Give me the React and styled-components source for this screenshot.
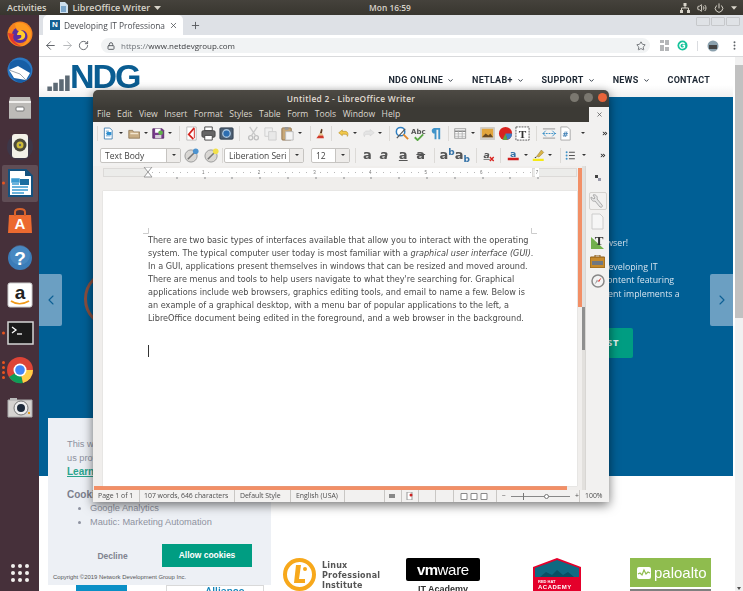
import React from "react";
import styled, { createGlobalStyle } from "styled-components";
import { ArrowLeft, ArrowRight, RotateCw, Lock, Star, X, Plus, MoreVertical, ChevronDown, ChevronLeft, ChevronRight, Volume2, Power } from "lucide-react";

const Global = createGlobalStyle`
  html, body { margin: 0; padding: 0; background: #fff; }
  * { box-sizing: border-box; }
  #root { width: 743px; height: 591px; overflow: hidden; }
`;
const UI = `"Open Sans", "DejaVu Sans", sans-serif`;

const Desktop = styled.div`position: relative; width: 743px; height: 591px; overflow: hidden; display: flex; flex-direction: column; font-family: ${UI}; filter: blur(0.35px);`;
const TopBar = styled.div`height: 15px; flex: none; background: linear-gradient(#45423c, #38362f); color: #d8d4ca; font-size: 9px; font-weight: 600; display: grid; grid-template-columns: 1fr auto 1fr; align-items: center; padding: 0 6px 0 7px;`;
const TopLeft = styled.div`display: flex; align-items: center; gap: 13px;`;
const AppLabel = styled.div`display: flex; align-items: center; gap: 4px;`;
const Clock = styled.div`margin-left: 36px; font-size: 8.4px;`;
const Tray = styled.div`display: flex; justify-content: flex-end; align-items: center; gap: 7px;`;
const Main = styled.div`flex: 1; display: flex; min-height: 0;`;
const Dock = styled.div`width: 39px; flex: none; background: #46303a; display: flex; flex-direction: column; align-items: center;`;
const DockItem = styled.div`position: relative; width: 36px; height: 37.4px; flex: none; display: flex; align-items: center; justify-content: center; border-radius: 2px; background: ${p => p.$active ? "rgba(255,255,255,.14)" : "transparent"};`;
const Dots = styled.div`position: absolute; left: 0; top: 50%; transform: translateY(-50%); display: flex; flex-direction: column; gap: 2px;`;
const Dot = styled.i`display: block; width: 3px; height: 3px; border-radius: 50%; background: #e9541f;`;
const AppGrid = styled.div`margin-top: auto; margin-bottom: 9px; display: grid; grid-template-columns: repeat(3, 4px); gap: 3px;`;
const GridDot = styled.i`width: 4px; height: 4px; border-radius: 50%; background: #f2f0ee;`;

const Browser = styled.div`flex: 1; min-width: 0; display: flex; flex-direction: column;`;
const TabStrip = styled.div`height: 20px; flex: none; background: #dee1e6; display: flex; align-items: flex-end; padding-left: 4px; position: relative;`;
const Tab = styled.div`width: 140px; height: 20px; background: #fff; border-radius: 5px 5px 0 0; display: flex; align-items: center; padding-left: 7px; gap: 4px; font-size: 8.4px; color: #4a4d52; white-space: nowrap; overflow: hidden;`;
const Favicon = styled.span`width: 10px; height: 10px; flex: none; background: #135f92; border: 1px solid #135f92; color: #fff; font: bold 8px/8px "Liberation Sans", sans-serif; text-align: center;`;
const TabTitle = styled.span`width: 101px; overflow: hidden;`;
const NewTab = styled.div`display: flex; align-self: center; margin-left: 7px; color: #55585c;`;
const WinBtns = styled.div`position: absolute; right: 3px; top: 2px; display: flex; gap: 1px;`;
const WinBtn = styled.span`width: 14px; height: 9px; border: 1px solid #c6c8cb; border-radius: 1px; background: #dfe2e6;`;
const UrlBar = styled.div`height: 22px; flex: none; background: #fff; border-bottom: 1px solid #d9dadc; display: flex; align-items: center; padding-left: 5px; color: #5f6368;`;
const NavIcons = styled.div`display: flex; gap: 4px; width: 57px;`;
const Omni = styled.div`width: 549px; height: 15px; border-radius: 8px; background: #f1f3f4; display: flex; align-items: center; padding: 0 4px 0 6px; gap: 6px;`;
const UrlText = styled.span`flex: 1; color: #3b3d40; font-size: 8px;`;
const UrlMuted = styled.span`color: #70757a;`;
const Exts = styled.div`display: flex; align-items: center; margin-left: 10px; gap: 8px;`;
const ExtSep = styled.i`width: 1px; height: 10px; background: #dadce0; margin: 0 1px;`;

const PageWrap = styled.div`flex: 1; min-height: 0; display: flex; background: #fff;`;
const Page = styled.div`flex: 1; min-width: 0; overflow: hidden; display: flex; flex-direction: column; margin-right: 2px;`;
const ScrollBar = styled.div`width: 8px; flex: none; background: #f1f1f1; display: flex; flex-direction: column; padding-top: 8px;`;
const ScrollThumb = styled.div`height: 253px; background: #c1c1c1;`;
const ScrollArrow = styled.div`margin-top: auto; margin-bottom: 1px; margin-left: 2px; width: 0; height: 0; border-left: 2px solid transparent; border-right: 2px solid transparent; border-top: 3px solid #505050;`;
const Header = styled.header`height: 40px; flex: none; display: flex; align-items: flex-start; padding: 8px 0 0 8px; background: linear-gradient(#fff 70%, #f1f1f1);`;
const Logo = styled.div`display: flex; align-items: flex-end; height: 26px;`;
const LogoText = styled.span`font: bold 34px/26px "Liberation Sans", sans-serif; color: #0a5d92; letter-spacing: -2px; margin-left: -5px; position: relative; top: -2px;`;
const Nav = styled.nav`margin-left: auto; margin-right: 23px; margin-top: 9px; display: flex; gap: 18px; font: 700 9px/12px Roboto, sans-serif; letter-spacing: .25px; color: #1d2733;`;
const NavItem = styled.span`display: flex; align-items: center; gap: 4px; white-space: nowrap;`;

const Hero = styled.section`height: 379px; flex: none; background: #005f95; position: relative; display: flex; padding: 173px 0 0 45px;`;
const Ring = styled.div`width: 58px; height: 58px; flex: none; border-radius: 50%; border: 3px solid #8a4f3f;`;
const Arrow = styled.div`position: absolute; top: 177px; ${p => p.$right ? "right: 0;" : "left: 0;"} width: 23px; height: 52px; background: #6b9fc2; color: #0c5f94; display: flex; align-items: center; justify-content: center; border-radius: ${p => p.$right ? "2px 0 0 2px" : "0 2px 2px 0"};`;
const Copy = styled.div`position: absolute; left: 520px; top: 140px; color: #d5e3ee; font-size: 8.8px; line-height: 13.5px; white-space: nowrap;`;
const CopyLine = styled.div`padding-left: ${p => p.$in}px; margin-bottom: ${p => p.$gap || 0}px;`;
const Cta = styled.div`position: absolute; left: 510px; top: 231px; width: 84px; height: 30px; border-radius: 2px; background: #009d82; color: #e6f4f1; font: 700 9.5px/30px ${UI}; letter-spacing: .6px; text-align: right; padding-right: 14px;`;

const Partners = styled.section`flex: 1; display: flex; align-items: flex-start; padding: 82px 0 0 37px; overflow: hidden;`;
const BlueTile = styled.div`width: 51px; height: 10px; margin-top: 26px; background: #0a8fc6; flex: none;`;
const Alliance = styled.div`width: 98px; margin: 27px 0 0 39px; flex: none; border: 1px solid #d9d9d9; border-bottom: 0; height: 10px; font: 500 11px/12px Roboto, sans-serif; color: #1585b9; padding-left: 38px;`;
const Lpi = styled.div`margin-left: 19px; width: 123px; display: flex; gap: 6px; flex: none;`;
const LpiText = styled.div`font: 600 8px/10px "DejaVu Sans", sans-serif; color: #555; margin-top: 3px; letter-spacing: .2px;`;
const VmwareCol = styled.div`width: 126px; flex: none; display: flex; flex-direction: column; align-items: flex-start;`;
const VmwareBox = styled.div`width: 74px; height: 23px; background: #000; border-radius: 2px; color: #fff; font: 15px/23px "Liberation Sans", sans-serif; text-align: center; letter-spacing: -.3px;`;
const Vm = styled.b`letter-spacing: -.6px;`;
const VmCaption = styled.div`width: 74px; text-align: center; font: bold 9px/14px "Liberation Sans", sans-serif; color: #333; margin-top: 1px;`;
const RedHat = styled.div`width: 98px; flex: none;`;
const Palo = styled.div`width: 81px; flex: none; height: 29px; background: #8fbc4e; color: #fff; font: 15px/28px "Liberation Sans", sans-serif; display: flex; align-items: center; gap: 3px; padding-left: 7px;`;
const PaloCol = styled.div`display: flex; flex-direction: column; gap: 2px; flex: none;`;
const PaloBar = styled.div`width: 81px; height: 4px; background: #808080;`;

const Cookie = styled.aside`position: absolute; left: 48px; top: 418px; width: 223px; height: 167px; background: #edf0f5; font: 9.25px/14px "Liberation Sans", sans-serif; color: #8e92a0; padding: 19px 0 0 19px;`;
const CookieLink = styled.div`color: #2aa58d; font-weight: bold; text-decoration: underline; font-size: 10px;`;
const CookieHead = styled.div`font-weight: bold; margin-top: 9px; color: #7c7f8d; font-size: 10px;`;
const CookieList = styled.ul`margin: -1px 0 0; padding: 0 0 0 23px; line-height: 14px;`;
const CookieActions = styled.div`display: flex; align-items: center; margin: 15px 0 0 -4px;`;
const Decline = styled.div`width: 99px; text-align: center; font-weight: bold; font-size: 8.5px; color: #80838f;`;
const Allow = styled.div`width: 90px; height: 23px; background: #009d82; color: #fff; font: bold 8.5px/23px "Liberation Sans", sans-serif; text-align: center;`;
const CopyRight = styled.div`font-size: 5.9px; line-height: 8px; color: #555; margin: 6px 0 0 -14px;`;

const Writer = styled.div`position: absolute; left: 93px; top: 90px; width: 516px; height: 412px; background: #f0efed; display: flex; flex-direction: column; border-radius: 5px 5px 0 0; box-shadow: 0 3px 11px rgba(0,0,0,.55); overflow: hidden;`;
const TitleBar = styled.div`height: 17px; flex: none; background: linear-gradient(#4d4a44, #3d3b36); color: #e0dcd3; font-size: 8.4px; font-weight: 600; line-height: 17px; text-align: center; position: relative; letter-spacing: .3px;`;
const Controls = styled.div`position: absolute; right: 2px; top: 3px; display: flex; gap: 5px;`;
const Ctl = styled.span`width: 9px; height: 9px; border-radius: 50%; background: ${p => p.$c};`;
const MenuBar = styled.div`height: 15px; flex: none; background: #3c3a35; color: #dcd8cf; font-size: 8.6px; line-height: 14px; display: flex; padding-left: 4px; gap: 6.500px; position: relative;`;
const MenuClose = styled.div`position: absolute; right: 0; top: 0; width: 20px; height: 15px; background: #f2f1f0; display: flex; align-items: center; justify-content: center; color: #555;`;
const Row = styled.div`height: ${p => p.$h}px; flex: none; display: flex; align-items: center; background: #f2f1f0;`;
const Slot = styled.div`width: ${p => p.$w}px; flex: none; display: flex; align-items: center; justify-content: center;`;
const Sep = styled.i`width: 1px; height: 15px; background: #dcdad7;`;
const Drop = styled.i`width: 0; height: 0; border-left: 2px solid transparent; border-right: 2px solid transparent; border-top: 2.5px solid #333;`;
const More = styled.span`font: bold 9px/9px "DejaVu Sans", sans-serif; color: #333;`;
const Combo = styled.div`width: ${p => p.$w}px; height: 15px; flex: none; margin-left: ${p => p.$ml || 0}px; background: #fff; border: 1px solid #c6c4c1; border-radius: 2px; display: flex; font-size: 8.5px; line-height: 13px; color: #444; padding-left: 4px; white-space: nowrap; overflow: hidden;`;
const ComboText = styled.span`flex: 1; overflow: hidden;`;
const ComboBtn = styled.span`width: 14px; flex: none; background: #eeecea; border-left: 1px solid #c6c4c1; display: flex; align-items: center; justify-content: center;`;
const Glyph = styled.span`font: bold 13px/14px "DejaVu Sans", sans-serif; color: #555; position: relative; text-decoration: ${p => p.$deco || "none"}; font-style: ${p => p.$it ? "italic" : "normal"};`;
const GlyphMark = styled.span`color: #3573a8; font-size: 9px; line-height: 0; position: relative; top: ${p => p.$top}px;`;

const Work = styled.div`flex: 1; min-height: 0; display: flex;`;
const DocColumn = styled.div`width: 489px; flex: none; display: flex; flex-direction: column;`;
const DocInner = styled.div`flex: 1; min-height: 0; display: flex;`;
const DocArea = styled.div`flex: 1; min-width: 0; display: flex; flex-direction: column; padding: 2px 0 0 10px; background: #f0eeec;`;
const Ruler = styled.div`height: 9px; width: 474px; flex: none; background: #fff; position: relative; display: flex; align-items: center; color: #777; font: 4.5px/9px "Liberation Sans", sans-serif;`;
const RulerMargin = styled.div`position: absolute; top: 0; bottom: 0; width: 45px; ${p => p.$r ? "right:0;" : "left:0;"} background: #ececea; border: 1px solid #dcdad8;`;
const RulerDots = styled.div`position: absolute; left: 0; right: 0; top: 4px; height: 1px; background: repeating-linear-gradient(90deg, #b9b9b9 0 1px, transparent 1px 7px);`;
const RulerNum = styled.span`position: absolute; top: 0; left: ${p => p.$x}px; background: #fff; padding: 0 1px;`;
const RulerTick = styled.i`position: absolute; bottom: -2px; left: ${p => p.$x}px; width: 2px; height: 2px; background: #bbb;`;
const Indent = styled.svg`position: absolute; left: 40px; top: -1px;`;
const Paper = styled.div`width: 474px; margin-top: 14px; flex: 1; min-height: 0; background: #fff; position: relative; padding: 43px 0 0 45px; color: #4a4a4a; font: 8.15px/13px "DejaVu Sans", sans-serif; box-shadow: 0 0 1px #bbb;`;
const Crop = styled.svg`position: absolute; ${p => p.$pos};`;
const DocLine = styled.div`white-space: nowrap;`;
const Em = styled.i`font-style: italic;`;
const Caret = styled.div`width: 1px; height: 12px; background: #333; margin-top: 20px;`;
const OrangeV = styled.div`width: 4px; flex: none; background: #f0eeec; padding-top: 2px;`;
const OrangeThumb = styled.div`height: 139px; background: #f28f66;`;
const Divider = styled.div`width: 3px; flex: none; background: #e2e0dd; padding-top: 141px;`;
const GreyThumb = styled.div`height: 43px; background: #8f8f8f;`;
const OrangeH = styled.div`height: 4px; flex: none; background: #f0eeec; display: flex;`;
const OrangeHBar = styled.div`width: 473px; margin-left: 1px; background: #f28f66;`;
const SideBar = styled.div`flex: 1; min-width: 0; display: flex; flex-direction: column; align-items: center; background: #f2f1f0; border-left: 1px solid #d8d6d3; padding-top: 8px;`;
const SideGrip = styled.svg`margin-bottom: 9px; flex: none;`;
const SideItem = styled.div`width: 100%; height: 20px; flex: none; display: flex; align-items: center; justify-content: center;`;
const SideActive = styled.div`width: 18px; height: 18px; border: 1px solid #d4d2cf; border-radius: 2px; display: flex; align-items: center; justify-content: center;`;
const Status = styled.div`height: 12px; flex: none; display: flex; background: #f2f1f0; font-size: 6.9px; line-height: 12px; color: #4c4c4c;`;
const Cell = styled.div`width: ${p => p.$w}px; flex: none; padding-left: ${p => p.$pl ?? 5}px; border-right: ${p => p.$nb ? "0" : "1px solid #c9c7c4"}; white-space: nowrap; display: flex; align-items: center; gap: 2px; overflow: hidden;`;
const Zoom = styled.div`width: 60px; height: 1px; background: #888; position: relative; margin: 0 3px;`;
const Knob = styled.i`position: absolute; left: 33px; top: -2px; width: 5px; height: 5px; border-radius: 50%; background: #fff; border: 1px solid #777;`;
const ZoomTick = styled.i`position: absolute; left: 12px; top: -3px; width: 1px; height: 7px; background: #777;`;

const S = ({ s = 15, v = 16, children }) => <svg width={s} height={s} viewBox={`0 0 ${v} ${v}`}>{children}</svg>;
const tool = {
  new: <S><path d="M3 1h7l3 3v11H3z" fill="#fff" stroke="#2a6fa8"/><path d="M5 5h4M5 8h6M5 11h6" stroke="#3a8cc8"/><path d="M6 6h6v4H6z" fill="#2f8fd0"/></S>,
  open: <S><path d="M1 4h5l1 2h8v8H1z" fill="#c8ad85" stroke="#8b7250"/><path d="M3 8h10" stroke="#f2e5cf" strokeWidth="2"/></S>,
  save: <S><path d="M1 2h12l2 2v10H1z" fill="#7a3b8e" stroke="#4a2258"/><path d="M4 2h7v5H4z" fill="#fff"/><path d="M4 10h8v4H4z" fill="#d8d0dc"/><circle cx="11" cy="7" r="3" fill="#5fb24a"/></S>,
  pdf: <S><path d="M3 1h10v14H3z" fill="#fff" stroke="#bbb"/><path d="M11 2L5 9l5 5" fill="none" stroke="#d3241f" strokeWidth="1.8"/><path d="M11 3v10" stroke="#d3241f"/></S>,
  print: <S><path d="M4 1h8v4H4z" fill="#fff" stroke="#444"/><rect x="1" y="5" width="14" height="7" rx="1.5" fill="#666" stroke="#444"/><path d="M4 10h8v5H4z" fill="#fff" stroke="#444"/></S>,
  preview: <S><rect x="1" y="2" width="14" height="12" rx="1" fill="#4c5f73" stroke="#2f3c4a"/><circle cx="8" cy="8" r="4" fill="#2c6db0" stroke="#a8c3dc" strokeWidth="1.4"/></S>,
  cut: <S><path d="M4 1l6 9M12 1L6 10" stroke="#c9c9c9" strokeWidth="1.4"/><circle cx="5" cy="12.500" r="2.200" fill="none" stroke="#c0c0c0" strokeWidth="1.4"/><circle cx="11" cy="12.500" r="2.200" fill="none" stroke="#c0c0c0" strokeWidth="1.4"/></S>,
  copy: <S><path d="M2 2h8v9H2z" fill="#f0f0f0" stroke="#d0d0d0"/><path d="M6 6h8v9H6z" fill="#e8e8e8" stroke="#cfcfcf"/></S>,
  paste: <S><rect x="2" y="2" width="10" height="13" rx="1" fill="#c8a878" stroke="#917450"/><path d="M5 1h4v3H5z" fill="#999"/><path d="M6 6h8v9H6z" fill="#f4f4f4" stroke="#bbb"/></S>,
  clone: <S><path d="M9 1l2 1-1 6H7z" fill="#5b3a1e"/><path d="M6 8h5l1 3H5z" fill="#e8c98c"/><path d="M5 11h7l1 4H2z" fill="#d23a2a"/></S>,
  undo: <S><path d="M6 3L1 7l5 4V9h4c2 0 3 1 3 3 2-4 0-7-3-7H6z" fill="#f2c94c" stroke="#b58a1a" strokeWidth=".8"/></S>,
  redo: <S><path d="M10 3l5 4-5 4V9H6c-2 0-3 1-3 3-2-4 0-7 3-7h4z" fill="#e4e4e4" stroke="#d4d4d4" strokeWidth=".8"/></S>,
  find: <S><circle cx="7" cy="6" r="4.500" fill="#fff" stroke="#2f7fc1" strokeWidth="1.6"/><path d="M10 9l5 5" stroke="#e0882a" strokeWidth="2"/><path d="M3 13L12 3" stroke="#555" strokeWidth="1.2"/></S>,
  spell: <S><text x="0" y="8" fontSize="7.5" fontWeight="bold" fill="#555" fontFamily="DejaVu Sans">Abc</text><path d="M4 12l3 3 6-6" fill="none" stroke="#5aa845" strokeWidth="2"/></S>,
  para: <S><path d="M7 14V8C3 8 3 2 7 2h6v12h-2V4H9v10z" fill="#3f93c9"/></S>,
  table: <S><rect x="1" y="2" width="14" height="12" fill="#fff" stroke="#888"/><path d="M1 5h14" stroke="#888" strokeWidth="2"/><path d="M1 8.500h14M1 11.500h14M5.500 4v10M10.500 4v10" stroke="#aaa"/></S>,
  image: <S><rect x="0" y="1" width="16" height="14" rx="1" fill="#d0cdc8"/><rect x="2" y="3" width="12" height="9" fill="#e2a53c"/><path d="M2 12l4-4 3 2 2-2 3 4z" fill="#6a4a20"/></S>,
  chart: <S><circle cx="8" cy="8" r="7" fill="#d8231f"/><path d="M8 8h7a7 7 0 0 1-5 6.700z" fill="#3d7cc4"/><path d="M8 8l2 6.700A7 7 0 0 1 5 14.300z" fill="#5aa845"/></S>,
  textbox: <S><rect x="1" y="1" width="14" height="14" fill="#fff" stroke="#555" strokeDasharray="2 1"/><text x="8" y="13" fontSize="12" textAnchor="middle" fontFamily="Liberation Serif" fontWeight="bold" fill="#333">T</text></S>,
  link: <S><path d="M1 3h13M1 13h13" stroke="#aaa" strokeWidth="1.4"/><path d="M1 8h14" stroke="#3f93c9" strokeWidth="1.3" strokeDasharray="2 1"/><path d="M4 5L1 8l3 3M11 5l3 3-3 3" fill="none" stroke="#3f93c9"/></S>,
  note: <S><path d="M3 1h7l3 3v11H3z" fill="#fff" stroke="#aaa"/><text x="8" y="12" fontSize="8" textAnchor="middle" fill="#3f7fb5" fontFamily="DejaVu Sans" fontWeight="bold">#</text></S>,
  style1: <S><circle cx="7.500" cy="8.500" r="6.500" fill="#d9d7d4" stroke="#999"/><path d="M4 12l7-7" stroke="#777" strokeWidth="1.6"/><circle cx="12.500" cy="3.500" r="3" fill="#4d93cf"/></S>,
  style2: <S><circle cx="7.500" cy="8.500" r="6.500" fill="#d9d7d4" stroke="#999"/><path d="M4 12l7-7" stroke="#777" strokeWidth="1.6"/><circle cx="12.500" cy="3.500" r="3" fill="#f2e04a"/></S>,
  clear: <S><text x="6" y="11" fontSize="12" fontStyle="italic" fontWeight="bold" fill="#555" textAnchor="middle" fontFamily="DejaVu Sans">a</text><path d="M2 13h8" stroke="#555"/><path d="M10 10l5 5M15 10l-5 5" stroke="#d9231f" strokeWidth="1.8"/></S>,
  color: <S><text x="8" y="10" fontSize="12" fontWeight="bold" fill="#3573a8" textAnchor="middle" fontFamily="DejaVu Sans">a</text><path d="M1 11h14v3H1z" fill="#cf1f1f"/></S>,
  hi: <S><path d="M12 1l3 3-6 6-3-1z" fill="#d9b346" stroke="#8b7330" strokeWidth=".6"/><path d="M6 9l-3 2 2 .500z" fill="#333"/><path d="M1 12h14v3H1z" fill="#f5ea14"/></S>,
  list: <S><path d="M6 3h9M6 8h9M6 13h9" stroke="#555" strokeWidth="1.6"/><circle cx="2.500" cy="3" r="1.500" fill="#3f93c9"/><circle cx="2.500" cy="8" r="1.500" fill="#3f93c9"/><circle cx="2.500" cy="13" r="1.500" fill="#3f93c9"/></S>,
};
const row1 = [
  [96,"sep"],[108,"new"],[121,"d"],[134,"open"],[146,"d"],[158,"save"],[171,"d"],[178,"sep"],[189,"pdf"],[208,"print"],[228,"preview"],[240,"sep"],[251,"cut"],[270,"copy"],[289,"paste"],[301,"d"],[310,"sep"],[320,"clone"],[332,"sep"],[343,"undo"],[355,"d"],[368,"redo"],[381,"d"],[388,"sep"],[399,"find"],[418,"spell"],[437,"para"],[448,"sep"],[460,"table"],[473,"d"],[486,"image"],[505,"chart"],[524,"textbox"],[536,"sep"],[548,"link"],[566,"note"],[580,"d"],[605,"more"],
];
const row2 = [[358,"sep"],[367,"a"],[386,"i"],[405,"u"],[425,"s"],[436,"sep"],[447,"sup"],[466,"sub"],[478,"sep"],[490,"clear"],[503,"sep"],[514,"color"],[528,"d"],[540,"hi"],[553,"d"],[562,"sep"],[571,"list"],[583,"d"],[605,"more"]];

const Tool = ({ k }) => {
  if (k === "sep") return <Sep />;
  if (k === "d") return <Drop />;
  if (k === "more") return <More>»</More>;
  if (k === "a") return <Glyph>a</Glyph>;
  if (k === "i") return <Glyph $it>a</Glyph>;
  if (k === "u") return <Glyph $deco="underline">a</Glyph>;
  if (k === "s") return <Glyph $deco="line-through">a</Glyph>;
  if (k === "sup") return <Glyph>a<GlyphMark $top={-4}>b</GlyphMark></Glyph>;
  if (k === "sub") return <Glyph>a<GlyphMark $top={3}>b</GlyphMark></Glyph>;
  return tool[k];
};
const Tools = ({ items, from }) => items.map(([c, k], i) => {
  const prev = i === 0 ? from : (items[i - 1][0] + c) / 2;
  const next = i === items.length - 1 ? c + (c - prev) : (c + items[i + 1][0]) / 2;
  return <Slot key={i} $w={next - prev}><Tool k={k} /></Slot>;
});

const D = ({ v = 28, s = 28, children }) => <svg width={s} height={s} viewBox={`0 0 ${v} ${v}`}>{children}</svg>;
const dockIcons = [
  <D><circle cx="14" cy="14" r="12.500" fill="#f5811f"/><circle cx="14" cy="15" r="8" fill="#5a2ea0"/><path d="M9 4c5-3 14 0 16 8 1 8-5 15-12 14 7-1 10-7 8-12-1-3-5-5-7-3-2 0-4 0-5-7z" fill="#ff9a1f"/><path d="M2 13c1 7 6 13 13 13-7-3-9-8-7-12z" fill="#e5372e"/><path d="M14 10c3 1 6 3 5 7-1 3-5 4-8 2 4 0 5-2 4-4h-4c0-2 1-3 3-5z" fill="#ffcc2b"/></D>,
  <D><circle cx="14" cy="13" r="12.500" fill="#2a78c4"/><path d="M4 6c6-6 18-4 21 6 0 7-4 12-10 14-8-1-13-10-11-20z" fill="#175ea5"/><path d="M3 13l9-4 12 7-4 7-12-2z" fill="#fff"/><path d="M3 13l11 4 6 6" fill="none" stroke="#9aa3ad"/></D>,
  <D><path d="M4 3h20l1 5v17H3V8z" fill="#bdbbb8"/><path d="M3 8h22" stroke="#f0efed" strokeWidth="2"/><rect x="10" y="13" width="8" height="4" rx="1" fill="#fff" stroke="#777"/><path d="M3 24h22v1H3z" fill="#999"/></D>,
  <D><circle cx="14" cy="15" r="13" fill="#33415c" opacity=".45"/><rect x="6" y="2" width="16" height="24" rx="3" fill="#f3f1e8"/><circle cx="14" cy="13" r="6.500" fill="#4b4a3c"/><circle cx="14" cy="13" r="3.500" fill="#cdbb3a"/><circle cx="14" cy="13" r="1.200" fill="#666"/></D>,
  <D><path d="M3 1h17l6 6v20H3z" fill="#fff" stroke="#14527f" strokeWidth="2"/><path d="M19 1l7 6h-7z" fill="#14527f"/><path d="M6 10h7v3H6zM6 15h7M6 18h16M6 21h16M6 24h12" stroke="#3a9bd1" strokeWidth="1.500" fill="#3a9bd1"/><rect x="14" y="10" width="9" height="6" fill="#1a6da0"/></D>,
  <D><path d="M3 8h22l1 18H2z" fill="#ec6a30"/><path d="M9 9V5c0-4 10-4 10 0v4" fill="none" stroke="#d9622b" strokeWidth="2"/><text x="14" y="22" textAnchor="middle" fontSize="15" fontWeight="bold" fill="#fff" fontFamily="Liberation Sans">A</text></D>,
  <D><circle cx="14" cy="14" r="12" fill="#3b7cb8"/><circle cx="14" cy="11" r="10" fill="#5693c9" opacity=".5"/><text x="14" y="21" textAnchor="middle" fontSize="19" fontWeight="bold" fill="#fff" fontFamily="Liberation Sans">?</text></D>,
  <D><rect x="2" y="2" width="24" height="24" rx="2" fill="#fff" stroke="#ccc"/><text x="14" y="18" textAnchor="middle" fontSize="19" fontWeight="bold" fill="#222" fontFamily="Liberation Sans">a</text><path d="M5 20c5 3.500 12 3.500 18 0" fill="none" stroke="#f09a1a" strokeWidth="1.800"/></D>,
  <D><rect x="2" y="3" width="25" height="22" fill="#1b1b1b" stroke="#d5d5d5" strokeWidth="1.500"/><path d="M6 8l4 3-4 3" fill="none" stroke="#fff" strokeWidth="1.300"/><path d="M11 15h5" stroke="#fff" strokeWidth="1.300"/></D>,
  <D><circle cx="14" cy="14" r="13" fill="#dd4437"/><path d="M14 14L3 21A13 13 0 0 0 17 27z" fill="#0f9d58"/><path d="M14 14l3 13A13 13 0 0 0 27 14z" fill="#ffce45"/><circle cx="14" cy="14" r="6.500" fill="#fff"/><circle cx="14" cy="14" r="4.800" fill="#4286f5"/></D>,
  <D><path d="M2 6h24v17H2z" fill="#d5d3d0" stroke="#aaa"/><path d="M4 4h7v2H4z" fill="#bbb"/><circle cx="15" cy="14" r="7" fill="#eee" stroke="#777"/><circle cx="15" cy="14" r="4" fill="#1d2a3a"/><rect x="22" y="18" width="2" height="2" fill="#e8a020"/></D>,
];
const running = { 4: 1, 8: 1, 9: 4 };
const lines = [
  "There are two basic types of interfaces available that allow you to interact with the operating",
  <>system. The typical computer user today is most familiar with a <Em>graphical user interface (GUI).</Em></>,
  "In a GUI, applications present themselves in windows that can be resized and moved around.",
  "There are menus and tools to help users navigate to what they're searching for. Graphical",
  "applications include web browsers, graphics editing tools, and email to name a few. Below is",
  "an example of a graphical desktop, with a menu bar of popular applications to the left, a",
  "LibreOffice document being edited in the foreground, and a web browser in the background.",
];

export default function App() {
  return (
    <Desktop>
      <Global />
      <TopBar>
        <TopLeft>
          <span>Activities</span>
          <AppLabel>
            <svg width="9" height="11" viewBox="0 0 9 11"><path d="M1 0h5l3 3v8H1z" fill="#cfe0ee"/><path d="M2 5h5M2 7h5M2 9h5" stroke="#2a6fa8"/></svg>
            LibreOffice Writer
            <svg width="7" height="4" viewBox="0 0 7 4"><path d="M0 0h7L3.500 4z" fill="#d8d4ca"/></svg>
          </AppLabel>
        </TopLeft>
        <Clock>Mon 16:59</Clock>
        <Tray>
          <svg width="10" height="10" viewBox="0 0 10 10"><path d="M3.500 0h3v3h-3zM0 7h3v3H0zM7 7h3v3H7z" fill="#d8d4ca"/><path d="M5 3v2M1.500 7V5h7v2" stroke="#d8d4ca" fill="none"/></svg>
          <Volume2 size={10} strokeWidth={2.4} />
          <Power size={10} strokeWidth={2.4} />
          <svg width="6" height="4" viewBox="0 0 7 4"><path d="M0 0h7L3.500 4z" fill="#d8d4ca"/></svg>
        </Tray>
      </TopBar>
      <Main>
        <Dock>
          {dockIcons.map((ic, i) => (
            <DockItem key={i} $active={i === 4}>
              {running[i] && <Dots>{Array.from({ length: running[i] }, (_, d) => <Dot key={d} />)}</Dots>}
              {ic}
            </DockItem>
          ))}
          <AppGrid>{Array.from({ length: 9 }, (_, i) => <GridDot key={i} />)}</AppGrid>
        </Dock>
        <Browser>
          <TabStrip>
            <Tab>
              <Favicon>N</Favicon>
              <TabTitle>Developing IT Professiona</TabTitle>
              <X size={9} strokeWidth={2} />
            </Tab>
            <NewTab><Plus size={11} strokeWidth={2} /></NewTab>
            <WinBtns><WinBtn /><WinBtn /><WinBtn /></WinBtns>
          </TabStrip>
          <UrlBar>
            <NavIcons>
              <ArrowLeft size={13} strokeWidth={1.8} />
              <ArrowRight size={13} strokeWidth={1.8} color="#b5b7ba" />
              <RotateCw size={11} strokeWidth={2} style={{ marginTop: 1 }} />
            </NavIcons>
            <Omni>
              <Lock size={8} strokeWidth={3} />
              <UrlText><UrlMuted>https://</UrlMuted>www.netdevgroup.com</UrlText>
              <Star size={10} strokeWidth={2} />
            </Omni>
            <Exts>
              <svg width="9" height="11" viewBox="0 0 9 11"><path d="M0 0h4v3H0zM5 0h4v5H5zM0 5h4v6H0zM5 7h4v4H5z" fill="#b4b6b8"/></svg>
              <svg width="11" height="11" viewBox="0 0 11 11"><circle cx="5.500" cy="5.500" r="5" fill="#15c39a"/><path d="M7.500 4a2.600 2.600 0 1 0 0 3.200V5.500H5.500" fill="none" stroke="#fff" strokeWidth="1.300"/></svg>
              <ExtSep />
              <svg width="12" height="12" viewBox="0 0 12 12"><circle cx="6" cy="6" r="5.500" fill="#8aa0ad"/><rect x="2" y="5" width="8" height="4" fill="#444"/></svg>
              <MoreVertical size={11} strokeWidth={2.2} style={{ marginLeft: 2 }} />
            </Exts>
          </UrlBar>
          <PageWrap>
            <Page>
              <Header>
                <Logo>
                  <svg width="28" height="20" viewBox="0 0 30 22"><path d="M0 17h5v5H0zM6.500 13h5v9h-5zM13 9h5v13h-5zM19.500 5h5v17h-5z" fill="#5d6a75"/></svg>
                  <LogoText>NDG</LogoText>
                </Logo>
                <Nav>
                  <NavItem>NDG ONLINE <ChevronDown size={7} strokeWidth={3} /></NavItem>
                  <NavItem>NETLAB+ <ChevronDown size={7} strokeWidth={3} /></NavItem>
                  <NavItem>SUPPORT <ChevronDown size={7} strokeWidth={3} /></NavItem>
                  <NavItem>NEWS <ChevronDown size={7} strokeWidth={3} /></NavItem>
                  <NavItem>CONTACT</NavItem>
                </Nav>
              </Header>
              <Hero>
                <Ring />
                <Arrow><ChevronLeft size={16} strokeWidth={1.6} /></Arrow>
                <Copy>
                  <CopyLine $in={12} $gap={10}>your browser!</CopyLine>
                  <CopyLine $in={43}>Developing IT</CopyLine>
                  <CopyLine $in={44}>content featuring</CopyLine>
                  <CopyLine $in={31}>content implements a</CopyLine>
                </Copy>
                <Cta>TEST</Cta>
                <Arrow $right><ChevronRight size={16} strokeWidth={1.6} /></Arrow>
              </Hero>
              <Partners>
                <BlueTile />
                <Alliance>Alliance</Alliance>
                <Lpi>
                  <svg width="33" height="33" viewBox="0 0 33 33"><circle cx="16.500" cy="16.500" r="14.500" fill="none" stroke="#f7a81b" strokeWidth="4"/><path d="M13 7h5l-2 14h6v4H11z" fill="#f7a81b"/><circle cx="22" cy="11" r="2" fill="#f7a81b"/></svg>
                  <LpiText>Linux<br />Professional<br />Institute</LpiText>
                </Lpi>
                <VmwareCol>
                  <VmwareBox><Vm>vm</Vm>ware</VmwareBox>
                  <VmCaption>IT Academy</VmCaption>
                </VmwareCol>
                <RedHat>
                  <svg width="50" height="33" viewBox="0 0 50 33"><path d="M25 0l24 9v24H1V9z" fill="#e4002b"/><path d="M25 2l22 8v9H3v-9z" fill="#0f6a82"/><path d="M8 19l6-5 6 3 5-5 6 5 5-3 6 5z" fill="#0a4f63"/><text x="6" y="24.500" fontSize="4" fontWeight="bold" fill="#fff" fontFamily="Liberation Sans">RED HAT</text><text x="6" y="31" fontSize="6" fontWeight="bold" fill="#fff" fontFamily="Liberation Sans" letterSpacing=".5">ACADEMY</text></svg>
                </RedHat>
                <PaloCol>
                  <Palo>
                    <svg width="14" height="12" viewBox="0 0 14 12"><rect width="14" height="12" rx="2" fill="#fff"/><path d="M1 7l2-1 2 2 2-5 2 4 2-2 2 1" fill="none" stroke="#8fbc4e" strokeWidth="1.200"/></svg>
                    paloalto
                  </Palo>
                  <PaloBar />
                </PaloCol>
              </Partners>
            </Page>
            <ScrollBar><ScrollThumb /><ScrollArrow /></ScrollBar>
          </PageWrap>
        </Browser>
      </Main>

      <Cookie>
        <div>This website uses cookies to help</div>
        <div>us provide the best experience.</div>
        <CookieLink>Learn more</CookieLink>
        <CookieHead>Cookies used:</CookieHead>
        <CookieList><li>Google Analytics</li><li>Mautic: Marketing Automation</li></CookieList>
        <CookieActions><Decline>Decline</Decline><Allow>Allow cookies</Allow></CookieActions>
        <CopyRight>Copyright ©2019 Network Development Group Inc.</CopyRight>
      </Cookie>

      <Writer>
        <TitleBar>
          Untitled 2 - LibreOffice Writer
          <Controls><Ctl $c="#7b7870" /><Ctl $c="#7b7870" /><Ctl $c="#e8643a" /></Controls>
        </TitleBar>
        <MenuBar>
          {["File", "Edit", "View", "Insert", "Format", "Styles", "Table", "Form", "Tools", "Window", "Help"].map(m => <span key={m}>{m}</span>)}
          <MenuClose><X size={7} strokeWidth={2.5} /></MenuClose>
        </MenuBar>
        <Row $h={22}><Tools items={row1} from={93} /></Row>
        <Row $h={22}>
          <Combo $w={81} $ml={7}><ComboText>Text Body</ComboText><ComboBtn><Drop /></ComboBtn></Combo>
          <Slot $w={21}>{tool.style1}</Slot>
          <Slot $w={18}>{tool.style2}</Slot>
          <Slot $w={4}><Sep /></Slot>
          <Combo $w={80}><ComboText>Liberation Seri</ComboText><ComboBtn><Drop /></ComboBtn></Combo>
          <Combo $w={39} $ml={7}><ComboText>12</ComboText><ComboBtn><Drop /></ComboBtn></Combo>
          <Tools items={row2} from={352} />
        </Row>
        <Work>
          <DocColumn>
            <DocInner>
              <DocArea>
                <Ruler>
                  <RulerDots />
                  <RulerMargin />
                  <RulerMargin $r />
                  {[1,2,3,4,5,6,7].map(n => <RulerNum key={n} $x={45 + n * 55.600 - 2.500}>{n}</RulerNum>)}
                  {Array.from({ length: 14 }, (_, i) => <RulerTick key={i} $x={45 + (i + 1) * 27.800} />)}
                  <Indent width="10" height="11" viewBox="0 0 10 11"><path d="M1 0h8L5 5l4 5H1l4-5z" fill="#fff" stroke="#999"/></Indent>
                </Ruler>
                <Paper>
                  <Crop $pos="left:40px;top:37px" width="6" height="6"><path d="M5.500 0v5.500H0" fill="none" stroke="#ccc"/></Crop>
                  <Crop $pos="right:40px;top:37px" width="6" height="6"><path d="M.5 0v5.500H6" fill="none" stroke="#ccc"/></Crop>
                  {lines.map((l, i) => <DocLine key={i}>{l}</DocLine>)}
                  <Caret />
                </Paper>
              </DocArea>
              <OrangeV><OrangeThumb /></OrangeV>
            </DocInner>
            <OrangeH><OrangeHBar /></OrangeH>
          </DocColumn>
          <Divider><GreyThumb /></Divider>
          <SideBar>
            <SideGrip width="8" height="8" viewBox="0 0 8 8"><path d="M1 1h3v3H1z" fill="#444"/><path d="M4 4h3v3H4z" fill="#99a"/></SideGrip>
            <SideItem><SideActive><svg width="15" height="15" viewBox="0 0 15 15"><path d="M3 1l2 3-1 1-3-2c0 3 2 5 4 4l5 6c2 1 3-1 2-2L7 5c1-2-1-5-4-4z" fill="#e6e6e6" stroke="#aaa"/></svg></SideActive></SideItem>
            <SideItem><svg width="15" height="17" viewBox="0 0 15 17"><path d="M2 1h8l3 3v12H2z" fill="#f6f6f6" stroke="#ccc"/></svg></SideItem>
            <SideItem><svg width="15" height="15" viewBox="0 0 15 15"><path d="M1 15L1 3l13 12z" fill="#72b04c"/><text x="9" y="11" fontSize="13" fontWeight="bold" textAnchor="middle" fill="#333" fontFamily="Liberation Serif">T</text></svg></SideItem>
            <SideItem><svg width="15" height="13" viewBox="0 0 15 13"><rect y="2" width="15" height="11" rx="1" fill="#c68a2c" stroke="#8a5a14"/><path d="M2 6h11v4H2z" fill="#6f7782"/><path d="M5 2V0h5v2" fill="none" stroke="#8a5a14"/></svg></SideItem>
            <SideItem><svg width="14" height="14" viewBox="0 0 14 14"><circle cx="7" cy="7" r="6" fill="#f3f3f3" stroke="#888" strokeWidth="1.500"/><path d="M3.500 10.500L7 7 6 5.500z" fill="#999"/><path d="M10.500 3.500L7 7 8 8z" fill="#d9231f"/></svg></SideItem>
          </SideBar>
        </Work>
        <Status>
          <Cell $w={47}>Page 1 of 1</Cell>
          <Cell $w={95} $pl={4}>107 words, 646 characters</Cell>
          <Cell $w={56}>Default Style</Cell>
          <Cell $w={54}>English (USA)</Cell>
          <Cell $w={40} />
          <Cell $w={17} $pl={4}><svg width="8" height="6" viewBox="0 0 8 6"><path d="M0 1h6v4H0z" fill="#888"/></svg></Cell>
          <Cell $w={17} $pl={4}><svg width="8" height="8" viewBox="0 0 8 8"><path d="M1 0h5v8H1z" fill="#fff" stroke="#999"/><circle cx="5" cy="3" r="1.500" fill="#c22"/></svg></Cell>
          <Cell $w={17} />
          <Cell $w={18} />
          <Cell $w={43} $pl={6}>
            {[0, 1, 2].map(i => <svg key={i} width="8" height="7" viewBox="0 0 8 7"><path d="M1 .5h6v6H1z" fill="#fff" stroke="#888"/></svg>)}
          </Cell>
          <Cell $w={83} $pl={5}>−<Zoom><ZoomTick /><Knob /></Zoom>+</Cell>
          <Cell $nb $w={28} $pl={5}>100%</Cell>
        </Status>
      </Writer>
    </Desktop>
  );
}
